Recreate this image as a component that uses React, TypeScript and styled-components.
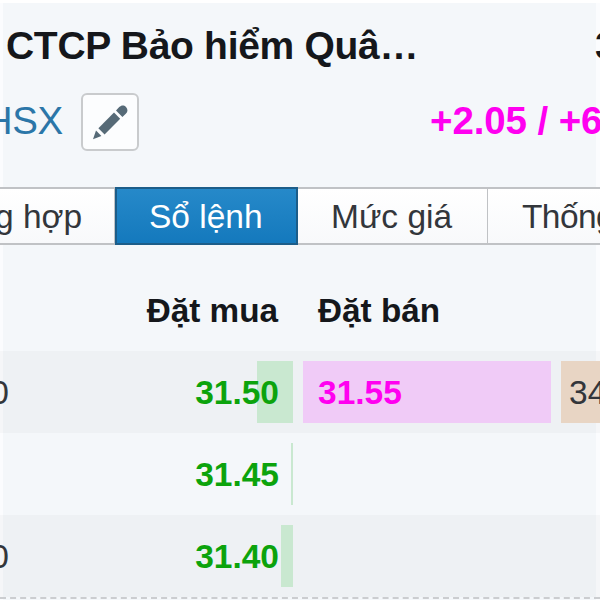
import styled, { createGlobalStyle } from 'styled-components';

interface OrderRow {
  bidVolume: string;
  bid: string;
  bidDepth: number;
  ask?: string;
  askDepth?: number;
  askVolume?: string;
}

const tabs = [
  { label: 'g hợp', width: 115, offset: -5 },
  { label: 'Sổ lệnh', width: 183, offset: 32, active: true },
  { label: 'Mức giá', width: 190, offset: 33 },
  { label: 'Thống', width: 200, offset: 34, spacing: -0.6 },
];

const orders: OrderRow[] = [
  { bidVolume: '0', bid: '31.50', bidDepth: 36, ask: '31.55', askDepth: 248, askVolume: '34' },
  { bidVolume: '', bid: '31.45', bidDepth: 2 },
  { bidVolume: '0', bid: '31.40', bidDepth: 12 },
];

function App() {
  return (
    <>
      <GlobalStyle />
      <Page>
        <TitleRow>
          <Company>CTCP Bảo hiểm Quâ…</Company>
          <LastPrice>3</LastPrice>
        </TitleRow>
        <InfoRow>
          <Exchange>HSX</Exchange>
          <EditButton aria-label="Edit">
            <PencilIcon />
          </EditButton>
          <Change>+2.05 / +6</Change>
        </InfoRow>
        <Tabs>
          {tabs.map(tab => (
            <Tab key={tab.label} $width={tab.width} $active={tab.active}>
              <TabLabel $offset={tab.offset} $spacing={tab.spacing}>{tab.label}</TabLabel>
            </Tab>
          ))}
        </Tabs>
        <Book>
          <HeaderRow>
            <span />
            <Heading $end>Đặt mua</Heading>
            <Heading>Đặt bán</Heading>
          </HeaderRow>
          {orders.map((order, index) => (
            <Row key={order.bid} $odd={index % 2 === 0}>
              <Cell $end>
                <BidVolume>{order.bidVolume}</BidVolume>
              </Cell>
              <Cell $end>
                <Depth $color="#c9e8d0" style={{ width: order.bidDepth }} />
                <Price $color="#0ca30c">{order.bid}</Price>
              </Cell>
              <Cell>
                {order.ask && (
                  <>
                    <Depth $color="#f0cbf7" style={{ width: order.askDepth }} />
                    <Price $color="#ff00f0">{order.ask}</Price>
                  </>
                )}
              </Cell>
              <Cell>
                {order.askVolume && (
                  <>
                    <Depth $color="#e8d5c4" style={{ width: '100%' }} />
                    <Volume>{order.askVolume}</Volume>
                  </>
                )}
              </Cell>
            </Row>
          ))}
        </Book>
      </Page>
    </>
  );
}

function PencilIcon() {
  return (
    <svg width="40" height="40" viewBox="0 0 40 40" fill="#566a77">
      <path d="M3 37.2 6 28.4 11.4 34Z" />
      <path d="M8.4 26.2 24 10.6 30.2 16.8 14.6 32.4Z" />
      <path d="M26 8.6 29.2 5.1C31.4 2.9 34 3 36 4.9 38 7 38 9.6 35.8 11.7L32.4 15Z" />
    </svg>
  );
}

const GlobalStyle = createGlobalStyle`
  * {
    box-sizing: border-box;
  }

  body {
    margin: 0;
    overflow: hidden;
    font-family: "Liberation Sans", Arial, sans-serif;
    color: #15171b;
  }
`;

const Page = styled.main`
  width: 600px;
  height: 600px;
  overflow: hidden;
  display: flex;
  flex-direction: column;
  background: linear-gradient(90deg, #fbfcfe 3px, #f4f7fa 3px, #f4f7fa 596px, #fbfcfe 596px);
  border-top: 3px solid #fff;
  white-space: nowrap;
`;

const TitleRow = styled.header`
  display: flex;
  height: 82px;
  flex: none;
  padding-left: 6px;
  font-size: 39px;
  line-height: 86px;
  font-weight: bold;
  letter-spacing: -0.3px;
`;

const Company = styled.div`
  width: 589px;
  flex: none;
`;

const LastPrice = styled.div`
  flex: none;
`;

const InfoRow = styled.div`
  display: flex;
  height: 102px;
  flex: none;
  padding-top: 8px;
  line-height: 56px;
`;

const Exchange = styled.div`
  display: flex;
  justify-content: flex-end;
  width: 63px;
  flex: none;
  font-size: 38.5px;
  letter-spacing: -0.3px;
  color: #2b76a8;
`;

const EditButton = styled.button`
  display: flex;
  align-items: center;
  justify-content: center;
  flex: none;
  width: 58px;
  height: 58px;
  margin-left: 18px;
  padding: 0;
  border: 2px solid #c9cbcd;
  border-radius: 6px;
  background: #fcfdfe;
`;

const Change = styled.div`
  flex: none;
  margin-left: 291px;
  font-size: 38.5px;
  font-weight: bold;
  letter-spacing: -0.1px;
  color: #ff00f0;
`;

const Tabs = styled.nav`
  display: flex;
  flex: none;
  height: 58px;
`;

const Tab = styled.div<{ $width: number; $active?: boolean }>`
  flex: none;
  width: ${props => props.$width}px;
  height: 58px;
  border: 2px solid ${props => (props.$active ? '#1c5d89' : '#c0c2c5')};
  border-left-width: ${props => (props.$active ? 2 : 0)}px;
  border-right-width: ${props => (props.$active ? 2 : 1)}px;
  background: ${props =>
    props.$active ? 'linear-gradient(#2689c9, #1479bd)' : 'linear-gradient(#ffffff, #f8f9fb)'};
  color: ${props => (props.$active ? '#fff' : '#33363b')};
  font-size: 33.5px;
  line-height: 56px;
`;

const TabLabel = styled.div<{ $offset: number; $spacing?: number }>`
  margin-left: ${props => props.$offset}px;
  letter-spacing: ${props => props.$spacing ?? 0}px;
`;

const Book = styled.section`
  flex: none;
  border-bottom: 2px dashed #cbcdd0;
`;

const HeaderRow = styled.div`
  display: grid;
  grid-template-columns: 17px 276px 248px 60px;
  column-gap: 10px;
  height: 106px;
  margin-left: -10px;
  padding-top: 38px;
`;

const Heading = styled.div<{ $end?: boolean }>`
  padding: 0 15px;
  font-size: 33.3px;
  font-weight: bold;
  line-height: 56px;
  text-align: ${props => (props.$end ? 'right' : 'left')};
`;

const Row = styled.div<{ $odd: boolean }>`
  display: grid;
  grid-template-columns: 17px 276px 248px 60px;
  column-gap: 10px;
  height: 82px;
  margin-left: -10px;
  padding: 10px 0;
  background: ${props => (props.$odd ? 'rgba(30, 20, 20, 0.028)' : 'transparent')};
`;

const Cell = styled.div<{ $end?: boolean }>`
  display: grid;
  grid-template-columns: 100%;
  align-items: center;
  justify-items: ${props => (props.$end ? 'end' : 'start')};

  > * {
    grid-area: 1 / 1;
  }
`;

const Depth = styled.div<{ $color: string }>`
  height: 62px;
  background: ${props => props.$color};
`;

const Price = styled.div<{ $color: string }>`
  padding: 2px 14px 0 15px;
  font-size: 33.5px;
  font-weight: bold;
  color: ${props => props.$color};
`;

const Volume = styled.div`
  padding: 2px 8px 0;
  font-size: 33.5px;
  color: #33363b;
`;

const BidVolume = styled(Volume)`
  margin-right: -2px;
  padding-right: 0;
  padding-left: 0;
`;

export default App;
